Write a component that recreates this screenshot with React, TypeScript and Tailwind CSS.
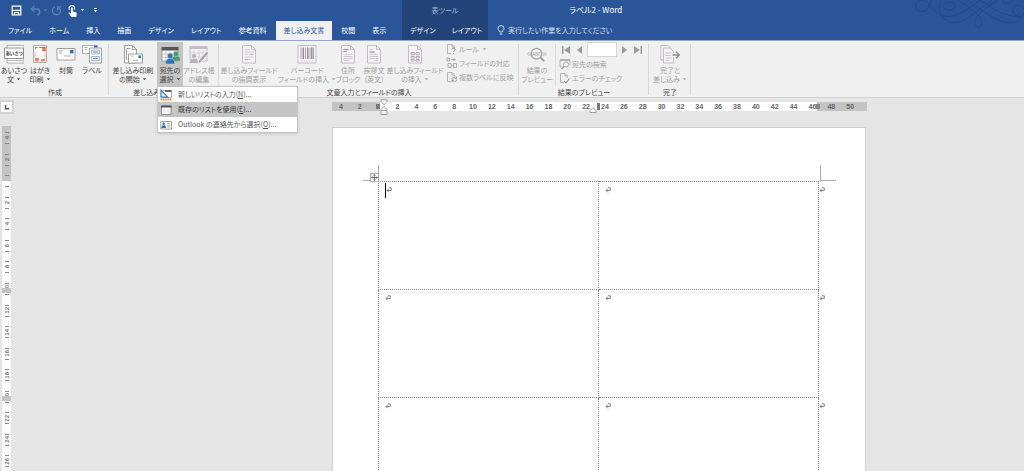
import type { ReactNode } from "react";
import clsx from "clsx";

const TABS = ["ファイル", "ホーム", "挿入", "描画", "デザイン", "レイアウト", "参考資料", "差し込み文書", "校閲", "表示"];
const ACTIVE_TAB = "差し込み文書";
const TABLE_TABS = ["デザイン", "レイアウト"];

const H_MARKS = Array.from({ length: 28 }, (_, i) => (i - 2) * 2);
const V_MARKS = Array.from({ length: 16 }, (_, i) => (i - 2) * 2);
const LABEL_ROWS = [0, 1, 2, 3, 4];

function Caret({ className }: { className?: string }) {
  return (
    <svg viewBox="0 0 5 3" className={clsx("inline-block h-[3px] w-[5px] shrink-0", className)} fill="currentColor" aria-hidden="true">
      <path d="M.8.2h3.400L2.500 2.200z" />
    </svg>
  );
}

function Icon({ children, small }: { children: ReactNode; small?: boolean }) {
  return (
    <svg
      viewBox={small ? "0 0 12 12" : "0 0 20 20"}
      className={clsx("shrink-0", small ? "size-3" : "size-5")}
      fill="none"
      stroke="#777"
      strokeWidth=".8"
      aria-hidden="true"
    >
      {children}
    </svg>
  );
}

/* ---------- large ribbon icons ---------- */

const GreetingIcon = () => (
  <Icon>
    <path fill="#fff" stroke="#999" d="M3 1.500h17v9H3zM3 14v5h17v-5" />
    <path fill="#fff" d="M.5 4h19v10.500H.5z" />
    <path d="M3 16.500h17" stroke="#aaa" />
    <text x="10" y="11" fontSize="4.500" fontWeight="700" textAnchor="middle" fill="#333" stroke="none">あいさつ</text>
  </Icon>
);

const PostcardIcon = () => (
  <Icon>
    <path fill="#fff" stroke="#999" d="M3.500 1.500h13v17h-13z" />
    <path stroke="#e8603c" strokeWidth="1" d="M5.500 5V3.500h2M9 3.500h4" />
    <path stroke="#e8603c" strokeWidth="1.400" d="M13 3.500h2v3h-2z" fill="#f7b39e" />
    <path stroke="#f0a58e" d="M5 8v6M15 9v6" />
    <path fill="#e8603c" stroke="none" d="M5 14h4v3.500H5zM11 15h4v2.500h-4z" opacity=".75" />
  </Icon>
);

const EnvelopeIcon = () => (
  <Icon>
    <path fill="#fff" stroke="#8a8a8a" d="M1 4.500h18v11.500H1z" />
    <path fill="#2e74b5" stroke="none" d="M14 6h3.500v3.500H14z" />
    <path stroke="#999" d="M3 7h4M3 9h3M8 12h7" />
  </Icon>
);

const LabelIcon = () => (
  <Icon>
    <path fill="#fff" stroke="#999" d="M.5 1.500h15v8H.5z" />
    <path stroke="#999" d="M2.500 3.500h3M2.500 5.500h2" />
    <path fill="#fff" stroke="#888" d="M7.500 4h12v15h-12z" />
    <path fill="#f2f7fc" stroke="#8aa9c9" d="M9.500 6h8v4h-8zM9.500 12.500h8v4h-8z" />
    <path stroke="#2e74b5" d="M11 8h5M11 14.500h5" />
    <path fill="#2e74b5" stroke="none" d="M12 1.500h3v2h-3z" />
  </Icon>
);

const StartMergeIcon = () => (
  <Icon>
    <path fill="#fff" stroke="#888" d="M1.500 1.500h8l4 4V19h-12z" />
    <path stroke="#888" d="M9.500 1.500v4h4M3.500 16V4.500h4" />
    <path fill="#fff" stroke="#888" d="M5.500 10h14v9h-14z" />
    <path fill="#2e74b5" stroke="none" d="M15.500 11.500h2.500v2.500h-2.500z" />
    <path stroke="#aaa" d="M7.500 12h3M10 16.500h5" />
  </Icon>
);

const RecipientsIcon = () => (
  <Icon>
    <path fill="#fff" stroke="#888" d="M2 3.500h16V17H2z" />
    <path fill="#555" stroke="none" d="M1.600 3h16.800v3.500H1.600z" />
    <path stroke="#bbb" d="M6 7v10M10 7v10M14 7v10M2 10h16M2 13.500h16" />
    <g stroke="#c5c5c5" strokeWidth=".6">
      <path fill="#3f9c78" d="M11.500 17c0-4 1.600-5 4.500-5s4.500 1.200 4.500 5z" />
      <circle cx="16" cy="10" r="2.700" fill="#3f9c78" />
      <path fill="#2e74b5" d="M5.500 20c0-4 1.700-5.500 4.700-5.500s4.600 1.500 4.600 5.500z" />
      <circle cx="10.200" cy="12" r="2.800" fill="#2e74b5" />
    </g>
  </Icon>
);

const EditListIcon = () => (
  <Icon>
    <path fill="#f5f2f5" stroke="#b9b3b9" d="M1 2.500h17V17H1z" />
    <path fill="#c4bec4" stroke="none" d="M.6 2h17.800v3H.6z" />
    <path stroke="#d0cad0" d="M5 6v11M10 6v11M14 6v11M1 9h17M1 13h17" />
    <path fill="#b9b3b9" stroke="#f0f0f0" d="M.5 19.500c0-4 1.500-5.500 4.500-5.500s4.500 1.500 4.500 5.500z" />
    <circle cx="5" cy="12" r="2.600" fill="#b9b3b9" stroke="#f0f0f0" />
    <path stroke="#f0f0f0" strokeWidth="4" d="M11 17.500 18.500 8" />
    <path stroke="#a8a2a8" strokeWidth="2.200" d="M11.500 16.500 18.500 8.500" />
    <path fill="#a8a2a8" stroke="none" d="m9.500 19 .8-3.300 2.200 2z" />
  </Icon>
);

function PageIcon({ children }: { children: ReactNode }) {
  return (
    <Icon>
      <path fill="#f7f4f7" stroke="#b5afb5" d="M3.500 1.500h9l4 4V19h-13z" />
      <path stroke="#b5afb5" d="M12.500 1.500v4h4" />
      <g stroke="#c2bcc2">{children}</g>
    </Icon>
  );
}

const HighlightIcon = () => (
  <PageIcon>
    <path d="M5.500 5.500h5M5.500 8h9M5.500 10.500h4M11 10.500h3.500M5.500 13h9M5.500 15.500h6" />
    <path strokeWidth="1.500" d="M10.500 10.500h3.500M6 15.500h3" />
  </PageIcon>
);

const BarcodeIcon = () => (
  <Icon>
    <path fill="#f7f4f7" stroke="#b5afb5" d="M1 1.500h18V19H1z" />
    <path stroke="#958f95" d="M4 3.500V15M8.500 3.500V15M13 3.500V15M16.500 3.500V15" />
    <path stroke="#958f95" strokeWidth="1.500" d="M6.300 3.500V15M10.800 3.500V15M14.800 3.500V15" />
    <path stroke="#c2bcc2" d="M4 17h12.500" strokeDasharray="1.500 1" />
  </Icon>
);

const AddressBlockIcon = () => (
  <PageIcon>
    <path stroke="#8f898f" strokeWidth="1.200" d="M5.500 5.500h5M5.500 7.500h3.500" />
    <path d="M5.500 10.500h9M5.500 12.500h9M5.500 14.500h9M5.500 16.500h6" />
  </PageIcon>
);

const GreetingLineIcon = () => (
  <PageIcon>
    <path stroke="#8f898f" strokeWidth="1.200" d="M5.500 8h5" />
    <path d="M5.500 5.500h4M5.500 10.500h9M5.500 12.500h9M5.500 14.500h9M10 16.500h4.500" />
  </PageIcon>
);

const InsertFieldIcon = () => (
  <PageIcon>
    <path stroke="#a59fa5" d="M6 8.500h3.300v2.300H6zM11 8.500h3.300v2.300H11zM6 12.500h3.300v1.500H6zM11 12.500h3.300v1.500H11zM6 15.500h3.300v1.500H6zM11 15.500h3.300v1.500H11z" />
  </PageIcon>
);

const PreviewIcon = () => (
  <Icon>
    <path stroke="#aaa" d="M2.500 8 .5 10l2 2M4.500 8l-2 2 2 2M17.500 8l2 2-2 2M15.500 8l2 2-2 2" />
    <circle cx="9.500" cy="9.800" r="5.300" fill="#f5f5f5" stroke="#a5a5a5" strokeWidth="1.300" />
    <text x="9.500" y="11.500" fontSize="4.500" textAnchor="middle" fill="#888" stroke="none">ABC</text>
    <path stroke="#a5a5a5" strokeWidth="2" d="m13.500 13.500 3.800 3.800" />
  </Icon>
);

const FinishIcon = () => (
  <Icon>
    <path fill="#f7f4f7" stroke="#b5afb5" d="M.8 1.500H8l3 3V16H.8z" />
    <path fill="#f7f4f7" stroke="#b5afb5" d="M3.500 4H10l3.500 3.500V19h-10z" />
    <path stroke="#c2bcc2" d="M5.500 9h6M5.500 11.500h6M5.500 14h6M5.500 16.500h4" />
    <path stroke="#f0f0f0" strokeWidth="4" d="M11 11h6" />
    <path stroke="#8d8d8d" strokeWidth="1.500" d="M12.500 11H19M16 7.800l3.200 3.200-3.200 3.200" />
  </Icon>
);

/* ---------- small ribbon icons ---------- */

function SmallPage({ children }: { children: ReactNode }) {
  return (
    <Icon small>
      <path stroke="#a8a2a8" d="M5 10.500H1.500v-9h4.500l2.500 2.500v1.500M6 1.500V4h2.500" />
      {children}
    </Icon>
  );
}

const RulesIcon = () => (
  <SmallPage>
    <path stroke="#888" strokeWidth="1" d="M6 6.300c.3-1.500 3-1.500 3 .2 0 1.200-1.500 1.300-1.500 2.600M7.500 10v1.200" />
  </SmallPage>
);

const MatchIcon = () => (
  <Icon small>
    <path stroke="#9a9a9a" d="M1 1h2.500v3H1zM2 6.500h3v4H2zM7.500 6.500h3v4h-3zM5 2.500h4M7.700 1l1.500 1.500L7.700 4M5.500 8.500h1.500" />
  </Icon>
);

const UpdateIcon = () => (
  <SmallPage>
    <path stroke="#9a9a9a" strokeWidth="1" d="M6 8.500c0-2 3-3 4-1M10.500 5.500v2h-2M10.800 8.500c0 2-3 3-4.300 1M6 11.200v-2h2" />
  </SmallPage>
);

const FindIcon = () => (
  <Icon small>
    <path stroke="#a8a2a8" d="M3.500 9H1V2h10v5" />
    <path stroke="#a8a2a8" strokeWidth="1.400" d="M1 2h10" />
    <circle cx="7" cy="6.500" r="2.500" stroke="#999" fill="#f5f5f5" />
    <path stroke="#999" strokeWidth="1.300" d="m5 8.500-2.500 2.800" />
  </Icon>
);

const CheckIcon = () => (
  <SmallPage>
    <path stroke="#888" strokeWidth="1.100" d="m5 9 1.800 2L10.500 6.500" />
  </SmallPage>
);

/* ---------- ribbon building blocks ---------- */

interface BigButtonProps {
  icon: ReactNode;
  lines: string[];
  width: string;
  caret?: boolean;
  disabled?: boolean;
  pressed?: boolean;
}

function BigButton({ icon, lines, width, caret, disabled, pressed }: BigButtonProps) {
  return (
    <button
      type="button"
      disabled={disabled}
      aria-expanded={pressed}
      className={clsx(
        "flex h-11 shrink-0 flex-col items-center pt-[2px] whitespace-nowrap",
        width,
        disabled ? "text-[#a0a0a0]" : "text-[#444]",
        pressed && "bg-[#c5c5c5]"
      )}
    >
      {icon}
      <span className="mt-[2px] flex flex-col items-center leading-[9px]">
        {lines.map((line, i) => (
          <span key={line} className="flex items-center gap-[2px]">
            {line}
            {caret && i === lines.length - 1 && <Caret />}
          </span>
        ))}
      </span>
    </button>
  );
}

function SmallButton({ icon, label, caret }: { icon: ReactNode; label: string; caret?: boolean }) {
  return (
    <button type="button" disabled className="flex h-[14px] items-center gap-[1px] whitespace-nowrap text-[#a0a0a0]">
      {icon}
      {label}
      {caret && <Caret className="ml-[2px]" />}
    </button>
  );
}

function Group({ title, width, children }: { title: string; width: string; children: ReactNode }) {
  return (
    <section className={clsx("relative flex shrink-0 flex-col", width)} aria-label={title}>
      <div className="flex h-[47px]">{children}</div>
      <h2 className="text-center leading-[9px] whitespace-nowrap text-[#444]">{title}</h2>
      <span className="absolute top-[2px] right-0 bottom-[2px] w-px bg-[#d8d8d8]" />
    </section>
  );
}

function NavButton({ label, path }: { label: string; path: string }) {
  return (
    <button type="button" disabled aria-label={label} className="flex w-[14px] justify-center">
      <svg viewBox="0 0 8 8" className="size-2" fill="#9c9c9c" aria-hidden="true">
        <path d={path} />
      </svg>
    </button>
  );
}

/* ---------- recipients menu ---------- */

const MENU = [
  {
    text: "新しいリストの入力",
    key: "N",
    icon: (
      <Icon small>
        <path fill="#fff" stroke="#999" d="M3 1.500h8.500v7H3z" />
        <path fill="#666" stroke="none" d="M5 1h6.500v2H5z" />
        <path fill="#fff" stroke="#2e74b5" strokeWidth="1.200" d="M1 1.200v7h6.500z" />
        <path stroke="#e8914f" strokeWidth="2" strokeDasharray="1.500 .4" d="M.5 10.500h11" />
      </Icon>
    ),
  },
  {
    text: "既存のリストを使用",
    key: "E",
    icon: (
      <Icon small>
        <path fill="#fff" stroke="#777" d="M1.500 2h9.500v8.500H1.500z" />
        <path fill="#555" stroke="none" d="M1 1.500h10.500v2H1z" />
        <path stroke="#d5d5d5" strokeWidth=".6" d="M4.500 4v6M8 4v6M2 7h8.500" />
      </Icon>
    ),
  },
  {
    text: "Outlook の連絡先から選択",
    key: "O",
    icon: (
      <Icon small>
        <path fill="#fff" stroke="#888" d="M.8 2.500h10.700v7.500H.8z" />
        <circle cx="3.700" cy="4.800" r="1.200" fill="#2e74b5" stroke="none" />
        <path fill="#2e74b5" stroke="none" d="M1.500 9c0-2.500 1-2.800 2.200-2.800S6 6.500 6 9z" />
        <path stroke="#999" d="M7.300 4.500h3M7.300 6.300h3M7.300 8h3" />
      </Icon>
    ),
  },
];

function RecipientsMenu() {
  return (
    <div role="menu" className="absolute top-11 left-0 z-10 w-[141px] border border-[#c6c6c6] bg-white shadow-sm">
      {MENU.map((item) => (
        <button
          key={item.key}
          type="button"
          role="menuitem"
          className={clsx(
            "flex h-[15px] w-full items-center gap-[6px] pl-[2px] whitespace-nowrap",
            item.key === "E" ? "bg-[#c5c5c5] text-[#333]" : "text-[#555]"
          )}
        >
          {item.icon}
          <span>
            {item.text}(<u>{item.key}</u>)...
          </span>
        </button>
      ))}
    </div>
  );
}

/* ---------- title bar ---------- */

function QuickAccess() {
  return (
    <div className="flex h-[21px] items-center pl-[11px] text-white">
      <button type="button" aria-label="上書き保存">
        <svg viewBox="0 0 11 11" className="size-[11px]" fill="none" stroke="currentColor" strokeWidth="1.200" aria-hidden="true">
          <path d="M1.200 1.200h8.600v8.600H1.200zM1.200 5.300h8.600M3.500 9.800V7.500h4v2.300" />
        </svg>
      </button>
      <button type="button" disabled aria-label="元に戻す" className="ml-2 flex items-center gap-[2px] text-[#5c7fb5]">
        <svg viewBox="0 0 11 11" className="size-[11px]" fill="none" stroke="currentColor" strokeWidth="1.400" aria-hidden="true">
          <path d="M4.300 1 1.300 4l3 3M1.500 4h5c4.300 0 4.300 5.500.5 6" />
        </svg>
        <Caret />
      </button>
      <button type="button" disabled aria-label="繰り返し" className="ml-[3px] text-[#5c7fb5]">
        <svg viewBox="0 0 11 11" className="size-[11px]" fill="none" stroke="currentColor" strokeWidth="1.300" aria-hidden="true">
          <path d="M4 1.800C1 3 .8 6.500 2.500 8.500c2 2 5.500 1.500 6.500-1 .8-2 0-3.800-1.500-4.800M6.500 5.500V1.800h3.500" />
        </svg>
      </button>
      <button type="button" aria-label="タッチ/マウス モードの切り替え" className="ml-[5px] flex items-center gap-[2px]">
        <svg viewBox="0 0 11 12" className="h-3 w-[11px]" fill="currentColor" aria-hidden="true">
          <path d="M4 3.500c0-1.300 1.800-1.300 1.800 0v3l3 .7c.8.200 1 .7.900 1.400L9.300 12H4.500L1.800 8.800c-.7-1 .3-1.700 1-1.100L4 8.600z" />
          <path d="M2.300 4.800C1.500 1.200 3.300.6 4.900.6s3.200.8 2.600 4" fill="none" stroke="currentColor" strokeWidth="1.100" />
        </svg>
        <Caret />
      </button>
      <button type="button" aria-label="クイック アクセス ツール バーのユーザー設定" className="ml-2 flex flex-col items-center gap-[1px]">
        <span className="h-px w-[3px] bg-white" />
        <Caret />
      </button>
    </div>
  );
}

function Swirl() {
  return (
    <svg viewBox="0 0 110 30" className="absolute top-0 right-0 h-[30px] w-[110px]" fill="none" stroke="#234a86" strokeWidth=".9" aria-hidden="true">
      <path d="M17 0c-1 7-4 11.500-10 11.500C2 11.500.5 6 2.500 3 5-1 12 0 15 4c5 6 9 12 18 12.500C45 17 55 8 66 0" />
      <path d="M28 0c-4 5-3 12 0 17 5 7 18 7 26 1C62 12 70 6 78 0" />
      <path d="M27 7c1-5 13-7 14-1 0 5-10 5-12 1" />
      <path d="M84 0C72 8 62 14 61 22c0 6 7 7 7 1 0-8-10-14-24-23" />
      <path d="M54 0c12 8 26 22 42 23 8 0 12-5 14-7" />
      <path d="M66 0c10 6 18 14 36 17 6 1 8-2 8-5M110 10c-2-8-12-5-11 1 0 6 8 7 11 3" />
      <path d="M88 0c2 5 8 4 10 0" />
    </svg>
  );
}

function Tab({ label }: { label: string }) {
  const active = label === ACTIVE_TAB;
  return (
    <button
      type="button"
      role="tab"
      aria-selected={active}
      className={clsx(
        "h-[19px] shrink-0 px-2 pb-px whitespace-nowrap",
        active ? "bg-[#f0f0f0] text-[#2a5699]" : "text-white"
      )}
    >
      {label}
    </button>
  );
}

function TitleBar() {
  return (
    <header className="relative grid h-[41px] shrink-0 grid-cols-[402px_86px_1fr] border-b border-[#8fa9cd] bg-[#2a5699]">
      <div>
        <QuickAccess />
        <div role="tablist" className="flex gap-px">
          {TABS.map((t) => (
            <Tab key={t} label={t} />
          ))}
        </div>
      </div>
      <div className="bg-[#234478]">
        <p className="h-[21px] text-center leading-[20px] text-[#a9bcd9]">表ツール</p>
        <div role="tablist" className="flex">
          {TABLE_TABS.map((t) => (
            <Tab key={t} label={t} />
          ))}
        </div>
      </div>
      <div>
        <Swirl />
        <h1 className="h-[21px] pl-[81px] text-[8px] leading-[20px] text-white">ラベル2 - Word</h1>
        <label className="flex h-[18px] items-center gap-[3px] pl-[9px] text-[#d4deed]">
          <svg viewBox="0 0 8 10" className="h-[10px] w-2" fill="none" stroke="currentColor" aria-hidden="true">
            <path d="M2.700 7C2.700 5.500 1 5.200 1 3.500a3 3 0 0 1 6 0C7 5.200 5.300 5.500 5.300 7zM2.700 9h2.600" />
          </svg>
          <input
            type="text"
            aria-label="操作アシスト"
            placeholder="実行したい作業を入力してください"
            className="w-[160px] bg-transparent outline-none placeholder:text-[#d4deed]"
          />
        </label>
      </div>
    </header>
  );
}

function Ribbon() {
  return (
    <div className="flex h-[57px] shrink-0 border-b border-[#d2d2d2] bg-[#f0f0f0] pt-px">
      <Group title="作成" width="w-[109px] pl-px">
        <BigButton icon={<GreetingIcon />} lines={["あいさつ", "文"]} caret width="w-[26px]" />
        <BigButton icon={<PostcardIcon />} lines={["はがき", "印刷"]} caret width="w-[26px]" />
        <BigButton icon={<EnvelopeIcon />} lines={["封筒"]} width="w-[26px]" />
        <BigButton icon={<LabelIcon />} lines={["ラベル"]} width="w-[26px]" />
      </Group>
      <Group title="差し込み印刷の開始" width="w-[110px]">
        <BigButton icon={<StartMergeIcon />} lines={["差し込み印刷", "の開始"]} caret width="w-12" />
        <div className="relative">
          <BigButton icon={<RecipientsIcon />} lines={["宛先の", "選択"]} caret pressed width="w-[26px]" />
          <RecipientsMenu />
        </div>
        <BigButton icon={<EditListIcon />} lines={["アドレス帳", "の編集"]} disabled width="w-8" />
      </Group>
      <Group title="文章入力とフィールドの挿入" width="w-[300px]">
        <BigButton icon={<HighlightIcon />} lines={["差し込みフィールド", "の強調表示"]} disabled width="w-[60px]" />
        <BigButton icon={<BarcodeIcon />} lines={["バーコード", "フィールドの挿入"]} caret disabled width="w-14" />
        <BigButton icon={<AddressBlockIcon />} lines={["住所", "ブロック"]} disabled width="w-[26px]" />
        <BigButton icon={<GreetingLineIcon />} lines={["挨拶文", "(英文)"]} disabled width="w-[26px]" />
        <BigButton icon={<InsertFieldIcon />} lines={["差し込みフィールド", "の挿入"]} caret disabled width="w-14" />
        <div className="flex flex-col pl-[3px]">
          <SmallButton icon={<RulesIcon />} label="ルール" caret />
          <SmallButton icon={<MatchIcon />} label="フィールドの対応" />
          <SmallButton icon={<UpdateIcon />} label="複数ラベルに反映" />
        </div>
      </Group>
      <Group title="結果のプレビュー" width="w-[130px]">
        <BigButton icon={<PreviewIcon />} lines={["結果の", "プレビュー"]} disabled width="w-9" />
        <div className="my-[2px] border-l border-[#dcdcdc]" />
        <div className="flex flex-col pl-[3px]">
          <div className="flex h-[15px] items-center">
            <NavButton label="先頭のレコード" path="M0 0h1.500v8H0zM8 0v8L2 4z" />
            <NavButton label="前のレコード" path="M6 0v8L1 4z" />
            <input type="text" disabled aria-label="レコード" className="h-[15px] w-[30px] border border-[#d5d5d5] bg-white" />
            <NavButton label="次のレコード" path="M2 0v8l5-4z" />
            <NavButton label="最後のレコード" path="M6.500 0H8v8H6.500zM0 0v8l6-4z" />
          </div>
          <SmallButton icon={<FindIcon />} label="宛先の検索" />
          <SmallButton icon={<CheckIcon />} label="エラーのチェック" />
        </div>
      </Group>
      <Group title="完了" width="w-[42px]">
        <BigButton icon={<FinishIcon />} lines={["完了と", "差し込み"]} caret disabled width="w-[42px]" />
      </Group>
    </div>
  );
}

/* ---------- rulers ---------- */

function HorizontalRuler() {
  return (
    <div className="relative h-[9px] w-[535px] shrink-0 bg-white font-['Liberation_Sans',sans-serif] text-[7px] font-bold text-[#666]">
      <div className="absolute inset-0 flex justify-between">
        <span className="w-12 bg-[#c3c3c3]" />
        <span className="w-[50px] bg-[#c3c3c3]" />
      </div>
      <div className="relative flex h-full items-center pr-[7px]">
        {H_MARKS.map((n) => (
          <span key={n} className="flex-1 text-center">
            {n === 0 ? "" : Math.abs(n)}
          </span>
        ))}
      </div>
      <span className="absolute top-[2px] left-[44px] h-[5px] w-1 bg-[#777]" />
      <span className="absolute top-[1px] left-[265px] h-[7px] w-[3px] bg-[#777]" />
      <span className="absolute top-[2px] left-[484px] h-[5px] w-1 bg-[#888]" />
      <svg viewBox="0 0 8 16" className="absolute -top-[3px] left-[48px] h-4 w-2" fill="#fff" stroke="#888" strokeWidth=".8" aria-hidden="true">
        <path d="M1 .8h6v1.700L4 5.800 1 2.500zM1 15.500v-5L4 7.500l3 3v5zM1 11.500h6" />
      </svg>
      <svg viewBox="0 0 8 6" className="absolute top-[5px] left-[257px] h-[6px] w-2" fill="#fff" stroke="#888" strokeWidth=".8" aria-hidden="true">
        <path d="M1 5.500V3.500L4 .8l3 2.700v2z" />
      </svg>
    </div>
  );
}

function VerticalRuler() {
  return (
    <div className="ml-[2px] w-[9px] shrink-0 overflow-hidden bg-white pt-px font-['Liberation_Sans',sans-serif] text-[6px] leading-none font-bold text-[#777]">
      <div className="relative flex h-[345px] flex-col">
        <span className="absolute inset-x-0 -top-px h-[55px] bg-[#c3c3c3]" />
        {V_MARKS.map((n) => (
          <div key={n} className="relative flex flex-1 items-center justify-center">
            <span className="absolute top-[5px] h-3 w-1 border-y border-[#888]" />
            <span className="rotate-180 [writing-mode:vertical-rl]">{n === 0 ? "" : Math.abs(n)}</span>
            {(n === 10 || n === 20) && <span className="absolute inset-x-0 top-[10px] h-[5px] bg-[#c3c3c3]" />}
          </div>
        ))}
      </div>
    </div>
  );
}

/* ---------- document ---------- */

function ReturnMark() {
  return (
    <svg viewBox="0 0 6 6" className="size-[6px]" fill="none" stroke="#666" strokeWidth=".8" aria-hidden="true">
      <path d="M3 .8h2.300v2.700H1.200M2.800 1.800 1 3.500l1.800 1.800" />
    </svg>
  );
}

function Paper() {
  return (
    <div className="w-[534px] flex-1 overflow-hidden border border-b-0 border-[#cfcfcf] bg-white pt-[37px] pl-[30px]">
      <div className="relative flex h-4 w-[473px] justify-between">
        <span className="w-4 border-r border-b border-[#aaa]" />
        <span className="w-4 border-b border-l border-[#aaa]" />
        <svg viewBox="0 0 9 9" className="absolute top-2 left-[7px] size-[9px]" fill="#fff" stroke="#555" strokeWidth=".8" aria-hidden="true">
          <path stroke="#999" d="M.5.5h8v8h-8z" />
          <path d="M4.500 1.500v6M1.500 4.500h6M3.500 2.500l1-1 1 1M3.500 6.500l1 1 1-1M2.500 3.500l-1 1 1 1M6.500 3.500l1 1-1 1" fill="none" />
        </svg>
      </div>
      <table className="ml-[15px] table-fixed border-collapse">
        <tbody>
          {LABEL_ROWS.map((row) => (
            <tr key={row} className="h-[108px] align-top">
              <td className="w-[220px] border border-dotted border-[#888] p-0">
                <div className="flex h-4 items-center pl-[6px]">
                  {row === 0 && <span className="h-[15px] w-px bg-black" />}
                  <ReturnMark />
                </div>
              </td>
              <td className="w-[220px] border border-dotted border-[#888] p-0">
                <div className="flex h-4 items-center pl-[6px]">
                  <ReturnMark />
                </div>
              </td>
              <td className="p-0">
                <div className="flex h-4 items-center">
                  <ReturnMark />
                </div>
              </td>
            </tr>
          ))}
        </tbody>
      </table>
    </div>
  );
}

export default function App() {
  return (
    <div
      lang="ja"
      className="flex h-screen flex-col overflow-hidden bg-[#e5e5e5] font-['Noto_Sans_CJK_JP',sans-serif] text-[7px] leading-none [font-feature-settings:'palt']"
    >
      <TitleBar />
      <Ribbon />
      <main className="flex min-h-0 flex-1">
        <div className="flex w-[14px] shrink-0 flex-col pt-[2px]">
          <button type="button" aria-label="タブの種類" className="mb-3 flex h-[14px] items-center justify-center border-2 border-l border-[#d2d2d2] bg-white">
            <svg viewBox="0 0 6 6" className="size-[6px]" fill="none" stroke="#555" strokeWidth="1.400" aria-hidden="true">
              <path d="M1.500 1v3.800H5" />
            </svg>
          </button>
          <div className="flex min-h-0 flex-1">
            <VerticalRuler />
          </div>
        </div>
        <div className="flex flex-1 flex-col items-center pt-1 pl-[160px]">
          <HorizontalRuler />
          <div className="flex min-h-0 flex-1 pt-4">
            <Paper />
          </div>
        </div>
      </main>
    </div>
  );
}
